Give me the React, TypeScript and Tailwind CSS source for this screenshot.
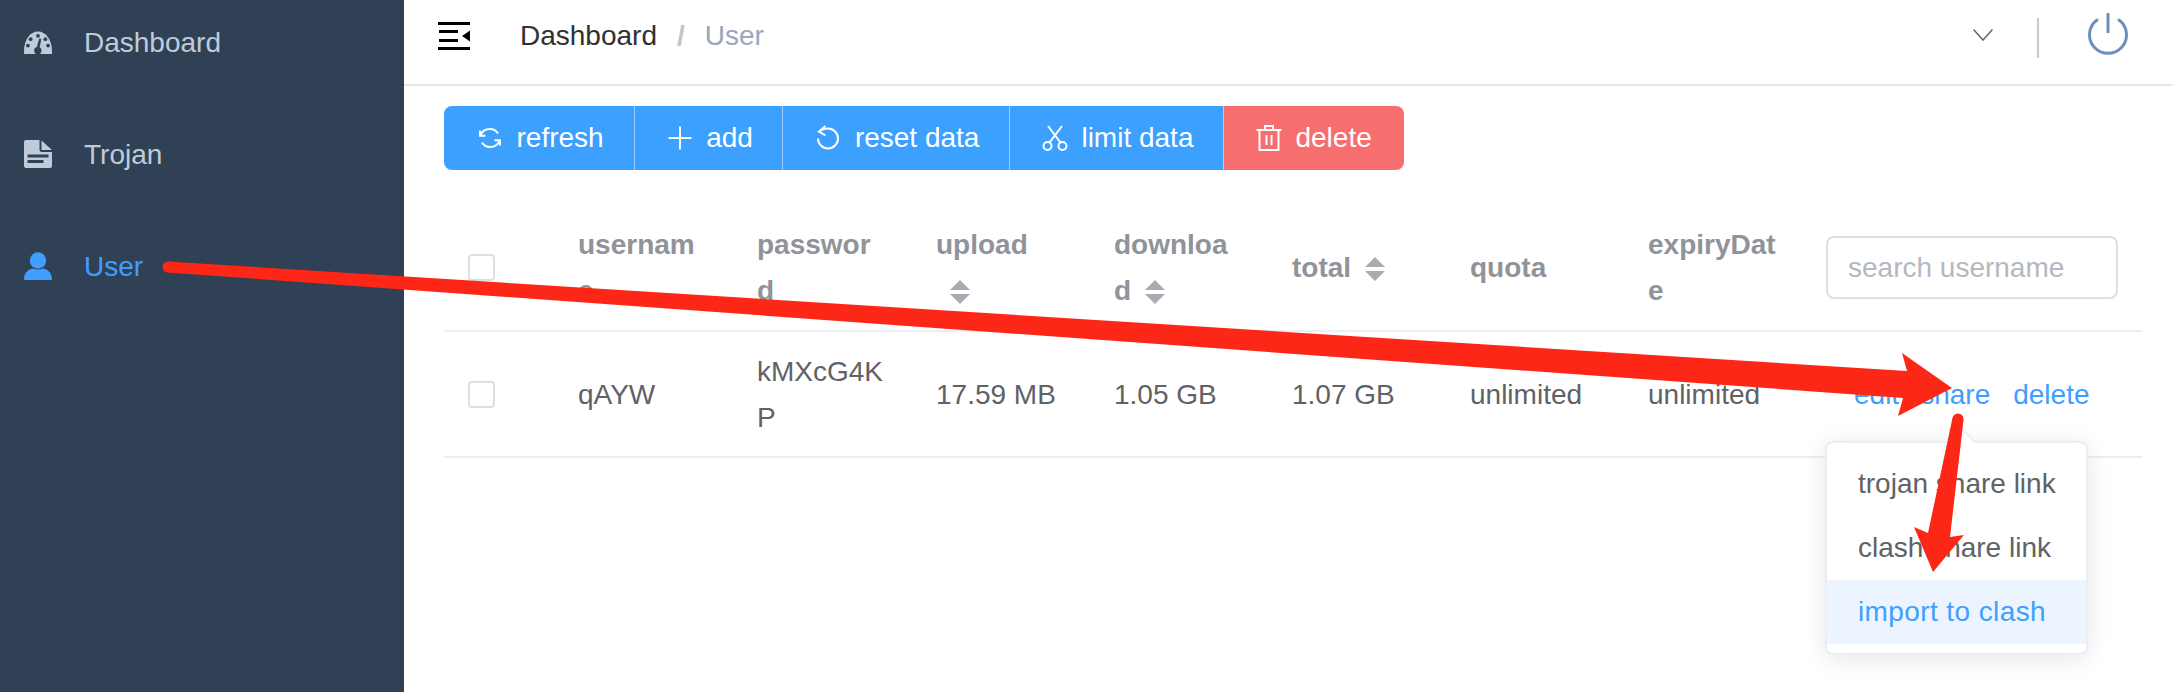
import React from 'react';

const font = { sans: "font-['Liberation_Sans',Arial,sans-serif]" };

const GaugeIcon = () => (
  <svg viewBox="0 0 28 23" className="w-7 h-[23px] shrink-0" fill="#bfcbd9">
    <path d="M0.100 23C-0.900 9.500 6 0.500 14 0.500s14.900 9 13.900 22.500z" />
    <g fill="#304156">
      <circle cx="14" cy="4.800" r="1.900" />
      <circle cx="6.600" cy="8.200" r="1.900" />
      <circle cx="21.400" cy="8.200" r="1.900" />
      <circle cx="3.900" cy="14.600" r="1.900" />
      <circle cx="24.100" cy="14.600" r="1.900" />
      <path d="M15.300 7.500l2 .4-1.800 9.100-2.900-.5z" />
      <circle cx="13.800" cy="19.600" r="3.700" />
    </g>
  </svg>
);

const FileIcon = () => (
  <svg viewBox="0 0 28 28" className="w-7 h-7 shrink-0">
    <path d="M2 0h13.500v9.500a2.500 2.500 0 0 0 2.500 2.500h10v14a2 2 0 0 1-2 2H2a2 2 0 0 1-2-2V2a2 2 0 0 1 2-2z" fill="#bfcbd9" />
    <path d="M17.500 0.500L28 10h-10.500z" fill="#bfcbd9" />
    <rect x="3.500" y="14.500" width="21" height="3" fill="#304156" />
    <rect x="3.500" y="20" width="16" height="3" fill="#304156" />
  </svg>
);

const UserIcon = () => (
  <svg viewBox="0 0 28 28" className="w-7 h-7 shrink-0" fill="#409eff">
    <circle cx="14" cy="8.500" r="8.200" />
    <path d="M0 27c0-6.500 5-10 9-10.500 3 1.400 7 1.400 10 0 4 .5 9 4 9 10.500 0 .6-.4 1-1 1H1c-.6 0-1-.4-1-1z" />
  </svg>
);

const MenuIcon = () => (
  <svg viewBox="0 0 32 28" className="w-8 h-7" fill="#000">
    <rect x="0" y="0" width="32" height="3" />
    <rect x="1" y="8" width="19" height="3" />
    <rect x="1" y="17" width="19" height="3" />
    <rect x="0" y="25" width="32" height="3" />
    <path d="M32 8.500v11l-8-5.500z" />
  </svg>
);

const RefreshIcon = () => (
  <svg viewBox="0 0 28 28" className="w-7 h-7 shrink-0" fill="none" stroke="#fff" strokeWidth="2">
    <path d="M4.500 11.500C6 7 10 5 14 5c3.500 0 6.500 2 8 4.500" />
    <path d="M23.500 16.500C22 21 18 23 14 23c-3.500 0-6.500-2-8-4.500" />
    <path d="M4 6.500v5.200h5.500" />
    <path d="M24 21.500v-5.200h-5.500" />
  </svg>
);

const PlusIcon = () => (
  <svg viewBox="0 0 28 28" className="w-7 h-7 shrink-0" stroke="#fff" strokeWidth="2">
    <path d="M14 2.500v23M2.500 14h23" />
  </svg>
);

const ResetIcon = () => (
  <svg viewBox="0 0 28 28" className="w-7 h-7 shrink-0" fill="none" stroke="#fff" strokeWidth="2">
    <path d="M5.500 7.500C7.500 5.500 11 4.500 14 4.500a10 10 0 1 1-10 10" />
    <path d="M11.500 2L5 7.500l6.500 4" />
  </svg>
);

const ScissorsIcon = () => (
  <svg viewBox="0 0 28 28" className="w-7 h-7 shrink-0" fill="none" stroke="#fff" strokeWidth="2">
    <circle cx="6.500" cy="22" r="4" />
    <circle cx="21.500" cy="22" r="4" />
    <path d="M8.500 18.500L21 2M19.500 18.500L7 2" />
  </svg>
);

const TrashIcon = () => (
  <svg viewBox="0 0 28 28" className="w-7 h-7 shrink-0" fill="none" stroke="#fff" strokeWidth="2">
    <path d="M1.500 6h25M4.500 6v20h19V6M10 6V2h8v4M11.500 11v10M16.500 11v10" />
  </svg>
);

// the 40px box makes "upload" wrap its caret to the next line, like the reference
const Sort = () => (
  <span className="inline-block w-10 pl-[14px] align-[-4px] leading-none">
    <svg viewBox="0 0 20 24" className="block w-5 h-6" fill="#a8abb2">
      <path d="M10 0l10 10H0zM10 24L0 14h20z" />
    </svg>
  </span>
);

const Checkbox = () => (
  <span className="block w-[27px] h-[27px] bg-white border-2 border-[#dcdfe6] rounded-[4px]" />
);

const NavItem = ({ icon, label, active }: { icon: React.ReactNode; label: string; active?: boolean }) => (
  <div className="h-[112px] flex items-center pl-6 gap-8">
    {icon}
    <span className={active ? 'text-[#409eff] pt-px' : 'text-[#bfcbd9] pt-px'}>{label}</span>
  </div>
);

const ToolButton = ({ icon, label, danger }: { icon: React.ReactNode; label: string; danger?: boolean }) => (
  <button
    className={`h-16 flex items-center gap-[12.5px] pl-[31px] pr-[29.5px] text-white border-l border-l-white/50 first:border-l-0 first:pl-8 first:pr-[30px] first:rounded-l-lg last:pr-8 last:rounded-r-lg ${
      danger ? 'bg-[#f76e6e]' : 'bg-[#3ca0ff]'
    }`}
  >
    {icon}
    {label}
  </button>
);

const columns = [
  { name: 'username', width: 'w-[179px]' },
  { name: 'password', width: 'w-[179px]' },
  { name: 'upload', width: 'w-[178px]' },
  { name: 'download', width: 'w-[178px]' },
  { name: 'total', width: 'w-[178px]' },
  { name: 'quota', width: 'w-[178px]' },
  { name: 'expiryDate', width: 'w-[178px]' },
];
const sortable = ['upload', 'download', 'total'];
const values = ['qAYW', 'kMXcG4KP', '17.59 MB', '1.05 GB', '1.07 GB', 'unlimited', 'unlimited'];

export default function App() {
  return (
    <div className={`relative w-[2172px] h-[692px] overflow-hidden flex bg-white text-[28px] leading-[46px] ${font.sans}`}>
      <aside className="w-[404px] shrink-0 bg-[#304156]">
        <div className="-mt-[14px]">
          <NavItem icon={<GaugeIcon />} label="Dashboard" />
          <NavItem icon={<FileIcon />} label="Trojan" />
          <NavItem icon={<UserIcon />} label="User" active />
        </div>
      </aside>

      <main className="flex-1 min-w-0">
        <header className="h-[86px] border-b-2 border-[#e6e6e6] flex items-center pl-[34px]">
          <div className="-mt-[12px]">
            <MenuIcon />
          </div>
          <div className="flex items-center ml-[50px] -mt-[12px]">
            <span className="text-[#303133]">Dashboard</span>
            <span className="text-[#c0c4cc] font-bold ml-5 mr-5">/</span>
            <span className="text-[#97a8be]">User</span>
          </div>
          <div className="ml-auto flex items-center -mt-[12px]">
            <svg viewBox="0 0 20 12" className="w-5 h-3 -mt-[2px]" fill="none" stroke="#606266" strokeWidth="1.500">
              <path d="M0.500 0.500L10 11 19.500 0.500" />
            </svg>
            <span className="w-[2px] h-10 bg-[#c8c8c8] mt-1 ml-[44px] mr-[48px]" />
            <svg viewBox="0 0 42 42" className="w-[42px] h-[42px] -mt-1 mr-[43px]" fill="none" stroke="#6d8fbd" strokeWidth="3">
              <path d="M10 7a18.500 18.500 0 1 0 22 0" strokeLinecap="round" />
              <path d="M21 0v20" />
            </svg>
          </div>
        </header>

        <div className="pl-10 pr-[30px]">
          <div className="flex pt-5">
            <ToolButton icon={<RefreshIcon />} label="refresh" />
            <ToolButton icon={<PlusIcon />} label="add" />
            <ToolButton icon={<ResetIcon />} label="reset data" />
            <ToolButton icon={<ScissorsIcon />} label="limit data" />
            <ToolButton icon={<TrashIcon />} label="delete" danger />
          </div>

          <table className="mt-[35px] w-[1698px] table-fixed border-collapse">
            <colgroup>
              <col className="w-[114px]" />
              {columns.map((c) => (
                <col key={c.name} className={c.width} />
              ))}
              <col />
            </colgroup>
            <thead>
              <tr className="h-[126px] border-b-2 border-[#ebeef5]">
                <th className="pl-6 align-middle">
                  <Checkbox />
                </th>
                {columns.map((c) => (
                  <th key={c.name} className="pl-5 pr-[30px] pt-px text-left font-bold text-[#909399] break-all align-middle">
                    {c.name}
                    {sortable.includes(c.name) && <Sort />}
                  </th>
                ))}
                <th className="pl-5 pr-6 align-middle">
                  <input
                    placeholder="search username"
                    className="w-full h-[63px] px-5 border-2 border-[#dcdfe6] rounded-lg outline-none font-normal placeholder:text-[#b4b8c0]"
                  />
                </th>
              </tr>
            </thead>
            <tbody>
              <tr className="h-[126px] border-b-2 border-[#ebeef5]">
                <td className="pl-6 align-middle">
                  <Checkbox />
                </td>
                {values.map((v, i) => (
                  <td key={i} className="pl-5 pr-[30px] pt-px text-[#606266] break-all align-middle">
                    {v}
                  </td>
                ))}
                <td className="pl-12 pt-px text-[#409eff] align-middle whitespace-nowrap">
                  <span>edit</span>
                  <span className="ml-[21px]">share</span>
                  <span className="ml-[23px]">delete</span>
                </td>
              </tr>
            </tbody>
          </table>
        </div>
      </main>

      {/* share dropdown */}
      <div className="absolute left-[1825px] top-[441px] w-[263px] h-[214px] bg-white border-2 border-[#ebeef5] rounded-lg py-[9px] shadow-[0_4px_24px_rgba(0,0,0,0.1)]">
        <span className="absolute left-[130px] -top-[9px] w-4 h-4 rotate-45 bg-white border-l-2 border-t-2 border-[#ebeef5]" />
        <div className="relative h-16 leading-[64px] pl-[31px] text-[#606266]">trojan share link</div>
        <div className="relative h-16 leading-[64px] pl-[31px] text-[#606266]">clash share link</div>
        <div className="relative h-16 leading-[64px] pl-[31px] tracking-[0.4px] text-[#409eff] bg-[#ecf5ff]">import to clash</div>
      </div>

      {/* annotation arrows */}
      <svg className="absolute inset-0 pointer-events-none" width="2172" height="692" viewBox="0 0 2172 692" fill="#fd2717">
        <circle cx="168" cy="267" r="5.500" />
        <path d="M168 261.500L1907 371 1902 353 1952 388 1898 416 1903 398 168 272.500z" />
        <circle cx="1958" cy="419" r="5.500" />
        <path d="M1952.500 418L1928 533 1914 527 1933 572 1964 535 1950 537 1963.500 420z" />
      </svg>
    </div>
  );
}
